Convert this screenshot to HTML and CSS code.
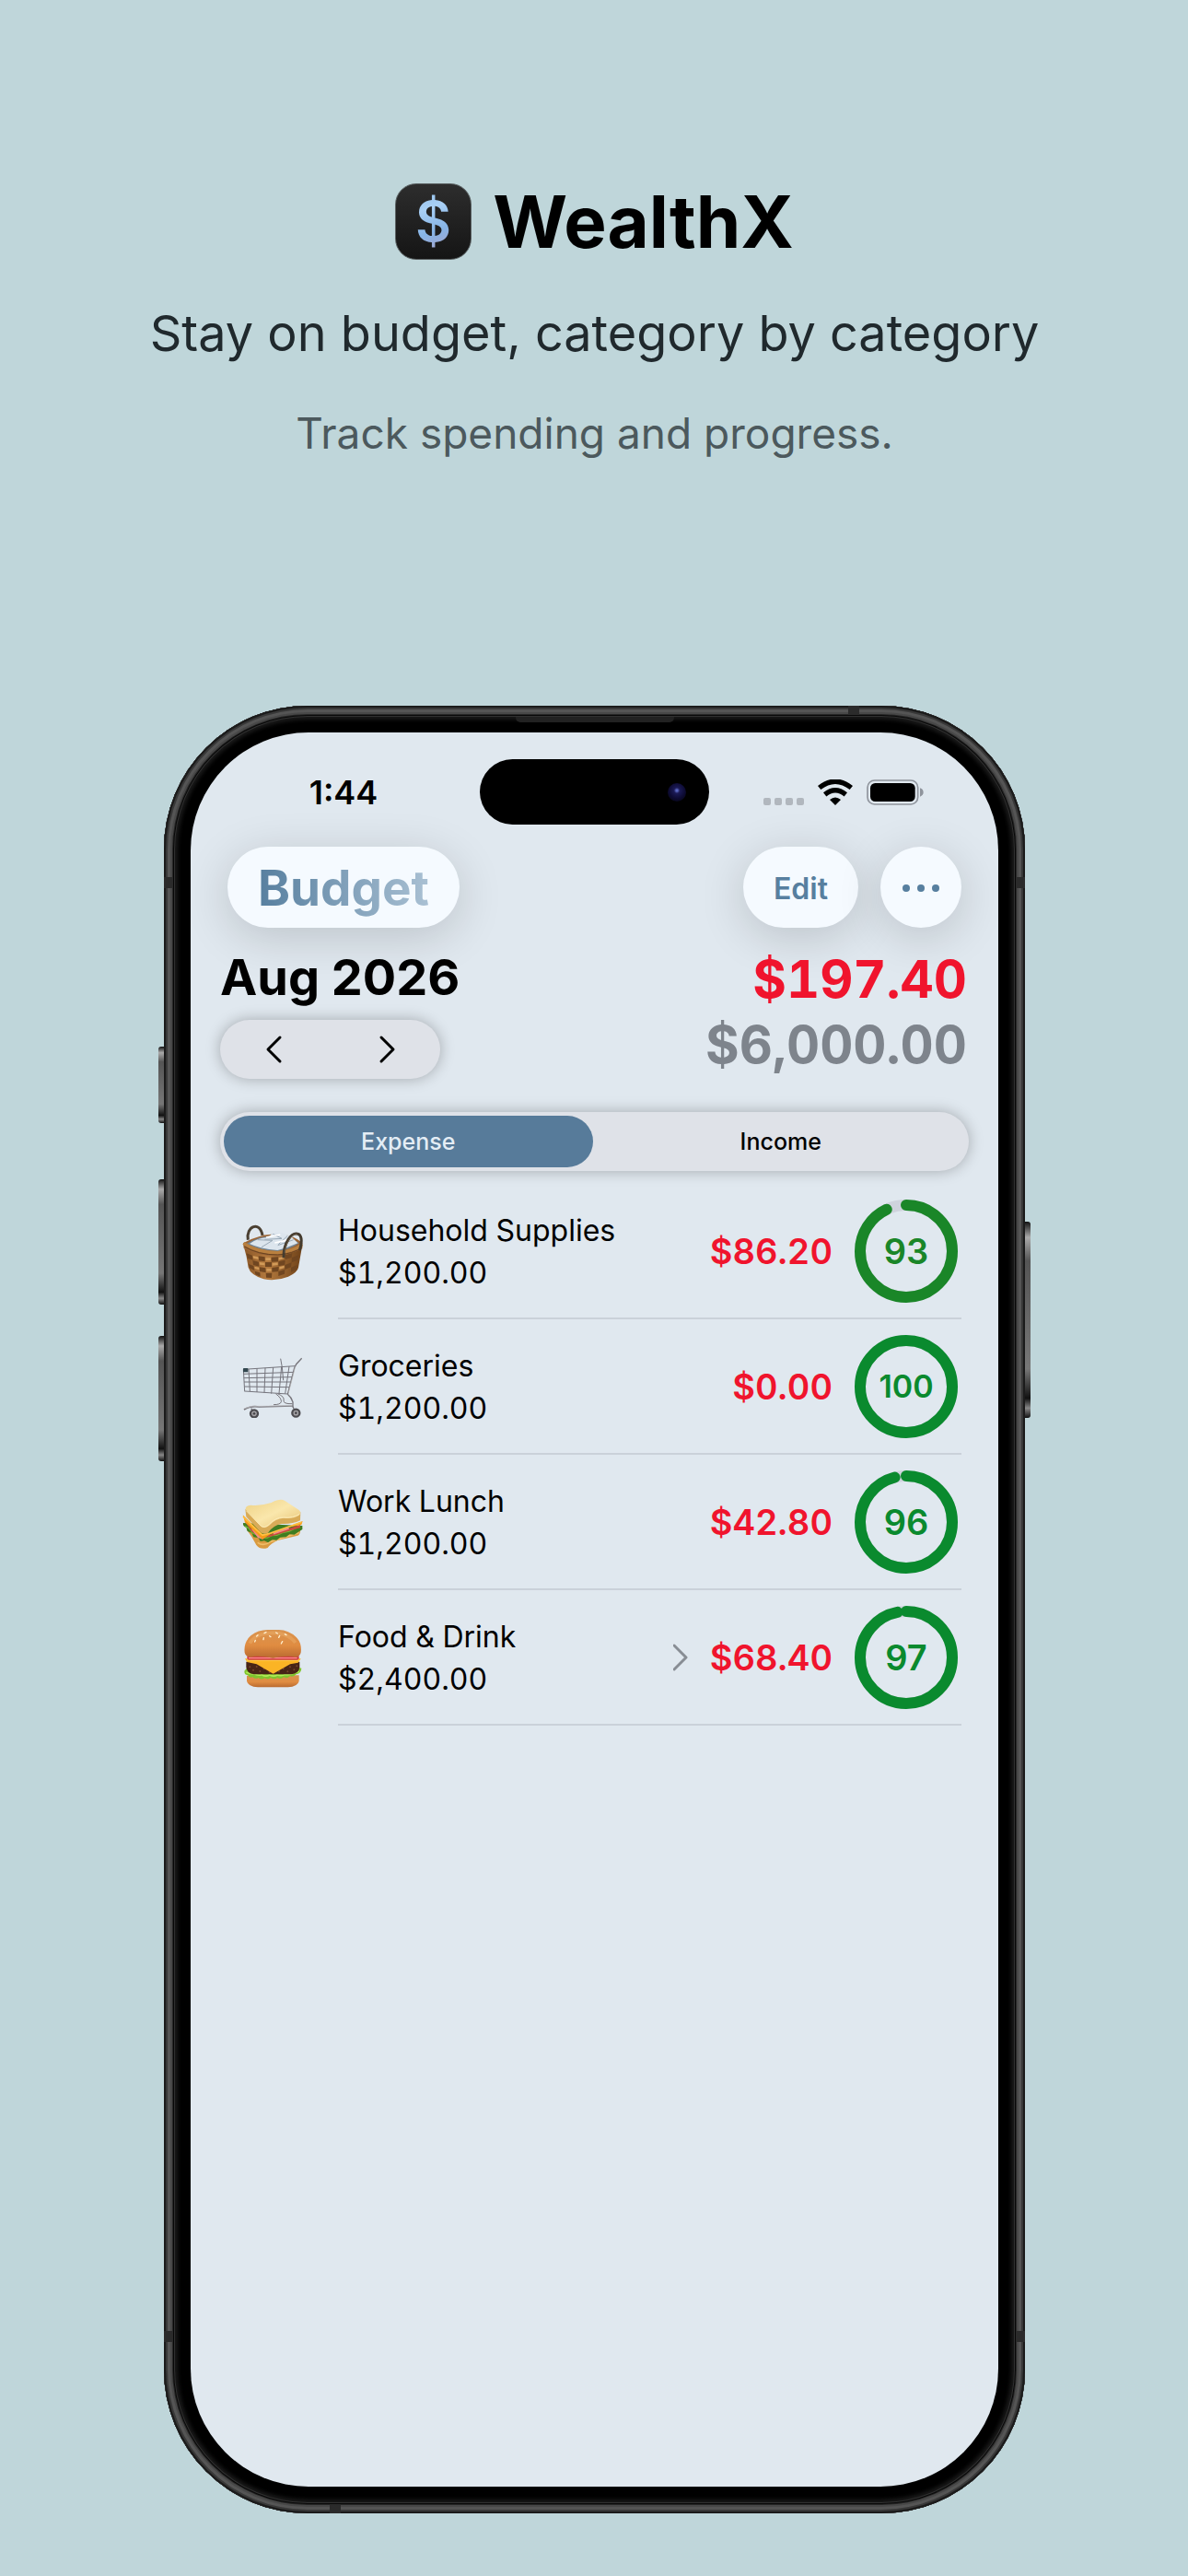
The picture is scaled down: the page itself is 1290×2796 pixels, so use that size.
FILE: index.html
```html
<!DOCTYPE html>
<html lang="en">
  <head>
    <meta charset="utf-8">
    <meta name="viewport" content="width=device-width, initial-scale=1.0">
    <title>WealthX</title>
    <link rel="stylesheet" href="styles.css">
  </head>
  <body>
    <header class="hero">
      <div class="brand">
        <span class="app-icon">$</span>
        <h1>WealthX</h1>
      </div>
      <h2>Stay on budget, category by category</h2>
      <p>Track spending and progress.</p>
    </header>

    <main class="phone">
      <!-- side buttons and antenna bands -->
      <span class="key key-action"></span>
      <span class="key key-up"></span>
      <span class="key key-down"></span>
      <span class="key key-power"></span>
      <span class="band band-left"></span>
      <span class="band band-left band-low"></span>
      <span class="band band-right"></span>
      <span class="band band-right band-low"></span>
      <span class="band band-top"></span>
      <span class="band band-bottom"></span>
      <span class="speaker"></span>

      <div class="screen">
        <div class="status">
          <time class="clock">1:44</time>
          <div class="island"><span class="camera"></span></div>
          <div class="signals">
            <svg width="44" height="28" viewBox="0 0 44 28" fill="#b1b7be">
              <rect x="0" y="20" width="8" height="8" rx="2"/>
              <rect x="12" y="20" width="8" height="8" rx="2"/>
              <rect x="24" y="20" width="8" height="8" rx="2"/>
              <rect x="36" y="20" width="8" height="8" rx="2"/>
            </svg>
            <svg width="38" height="28" viewBox="0 0 114 84">
              <path d="M5 27Q57 -14 109 27M23 49Q57 22 91 49" fill="none" stroke="#000" stroke-width="16"/>
              <path d="M39 66Q57 51 75 66L57 84Z"/>
            </svg>
            <svg width="62" height="28" viewBox="0 0 186 84">
              <rect x="3" y="3" width="164" height="78" rx="23" fill="none" stroke="#8f949c" stroke-width="5"/>
              <rect x="12" y="12" width="146" height="60" rx="16"/>
              <path d="M174 28Q185 32 185 42T174 56Z" fill="#8f949c"/>
            </svg>
          </div>
        </div>

        <nav class="toolbar">
          <div class="glass title"><span>Budget</span></div>
          <button class="glass edit">Edit</button>
          <button class="glass more" aria-label="More">
            <svg width="40" height="10" viewBox="0 0 40 10" fill="#577f9f">
              <circle cx="4" cy="5" r="4"/>
              <circle cx="20" cy="5" r="4"/>
              <circle cx="36" cy="5" r="4"/>
            </svg>
          </button>
        </nav>

        <section class="summary">
          <div>
            <h3>Aug 2026</h3>
            <div class="stepper">
              <button aria-label="Previous month">
                <svg width="20" height="32" viewBox="0 0 20 32"><path d="M17 3L4 16L17 29"/></svg>
              </button>
              <button aria-label="Next month">
                <svg width="20" height="32" viewBox="0 0 20 32"><path d="M3 3L16 16L3 29"/></svg>
              </button>
            </div>
          </div>
          <div class="totals">
            <div class="spent">$197.40</div>
            <div class="limit">$6,000.00</div>
          </div>
        </section>

        <div class="segments">
          <input type="radio" name="kind" id="expense" checked>
          <label for="expense">Expense</label>
          <input type="radio" name="kind" id="income">
          <label for="income">Income</label>
        </div>

        <ul class="categories">
          <li>
            <svg class="emoji" viewBox="130 73 198 198">
              <defs>
                <linearGradient id="wicker" x1="0" x2="1">
                  <stop offset="0" stop-color="#8a5728"/>
                  <stop offset=".4" stop-color="#b47a3e"/>
                  <stop offset="1" stop-color="#704319"/>
                </linearGradient>
              </defs>
              <path d="M149 132C141 88 188 68 196 118" fill="none" stroke="#4a3f31" stroke-width="9"/>
              <path d="M136 156Q145 185 150 222Q157 246 200 260Q240 268 280 252Q310 238 313 222L324 160Z" fill="url(#wicker)"/>
              <g fill="#704620">
                <path d="M144 176l19 7 2 15-18-6zM183 185l21 3v15l-20-3zM225 189l22-1v15l-22 1zM270 182l23-7-2 15-21 6z"/>
                <path d="M164 199l20 5 1 15-19-5zM205 205h21v15h-21zM248 203l22-5-1 15-21 5zM292 190l22-8-3 16-20 8z"/>
                <path d="M151 211l16 6 3 15-16-8zM186 221l20 3 1 15-20-4zM227 223l22-3-1 15-21 2zM269 214l22-8-2 15-20 8z"/>
                <path d="M171 234l17 5 1 13-16-7zM207 240h20l-1 16-18-1zM248 235l21-6-1 14-20 7zM289 222l21-8-4 15-17 8z"/>
              </g>
              <g fill="#d19a58">
                <path d="M165 184l17 4 1 8-17-4zM206 191h17v8h-17zM249 190l18-4-1 8-17 4zM186 205l17 2v8l-16-2zM228 208l18-2v8l-18 2zM170 219l15 3v8l-14-4zM209 226h16v8h-16zM251 220l16-4v8l-16 4z"/>
              </g>
              <path d="M133 143Q180 116 240 113Q300 118 326 142L326 160Q296 178 245 185Q174 184 135 159Z" fill="#9c6535"/>
              <path d="M145 144Q188 119 240 119Q291 122 315 143Q288 163 246 169Q184 167 145 144Z" fill="#718596"/>
              <path d="M154 145Q185 123 214 125L230 110L260 109L292 124L311 143L274 158L245 166Q188 161 154 145Z" fill="#dce5ed"/>
              <path d="M180 132l49 2-36 22m37-43l29 15-56 3m75-12l-30 28m49-15l-51 18" fill="none" stroke="#98a8b6" stroke-width="3"/>
              <path d="M208 124l46-9m-18 27l46-10" fill="none" stroke="#fff" stroke-width="5"/>
              <path d="M134 143Q178 173 245 174Q296 170 325 148" fill="none" stroke="#b9803f" stroke-width="10"/>
              <path d="M137 154Q181 181 246 181Q296 178 324 157" fill="none" stroke="#67421f" stroke-width="3"/>
              <path d="M265 191C264 142 291 104 314 114C326 121 324 147 317 166" fill="none" stroke="#443b2e" stroke-width="9"/>
              <path d="M268 174C273 140 291 111 310 114" fill="none" stroke="#81705a" stroke-width="2"/>
            </svg>
            <div class="body">
              <div class="name">Household Supplies<br>$1,200.00</div>
              <div class="amount">$86.20</div>
              <div class="ring olive">
                <svg viewBox="0 0 112 112"><circle cx="56" cy="56" r="50"/><circle class="arc" cx="56" cy="56" r="50" pathLength="100" stroke-dasharray="93 100"/></svg>
                <b>93</b>
              </div>
            </div>
          </li>
          <li>
            <svg class="emoji" viewBox="130 513 198 198">
              <g fill="none" stroke="#75757d" stroke-width="3">
                <path d="M134 553L302 542M134 568L298 562M135 581L293 578M136 594L288 594M137 609L283 611M138 624L278 633"/>
                <path d="M134 553l4 72M151 552l4 72M178 550v77M205 548l-3 81M231 546l-6 86M258 544l-8 88M283 543l-13 89"/>
                <path d="M255 518l5 28 4 43"/>
              </g>
              <g fill="none" stroke="#77757b" stroke-width="4">
                <path d="M324 517l-18 19-6 12-22 86M278 634q12 10 17 25v17"/>
                <path d="M239 632q20 15 18 27-3 9-25 9M245 632q24 10 20 22-2 12 28 11" stroke-width="3"/>
                <path d="M136 684q22-14 50-9l109-3" stroke-width="5"/>
                <path d="M159 680l9 13M295 674l7 16"/>
              </g>
              <path d="M138 680q26-11 50-7l105-2" fill="none" stroke="#c9c8cc" stroke-width="2"/>
              <path d="M303 544l-22 84" stroke="#bbb" stroke-width="2"/>
              <rect x="133" y="549" width="16" height="13" rx="2" fill="#33474f"/>
              <g fill="#a5a3a6" stroke="#4c4b4f" stroke-width="7">
                <circle cx="169" cy="697" r="12"/>
                <circle cx="305" cy="695" r="12"/>
              </g>
              <circle cx="169" cy="697" r="4" fill="#47464a"/>
              <circle cx="305" cy="695" r="4" fill="#47464a"/>
            </svg>
            <div class="body">
              <div class="name">Groceries<br>$1,200.00</div>
              <div class="amount">$0.00</div>
              <div class="ring full">
                <svg viewBox="0 0 112 112"><circle cx="56" cy="56" r="50"/><circle class="arc" cx="56" cy="56" r="50" pathLength="100" stroke-dasharray="100 100"/></svg>
                <b>100</b>
              </div>
            </div>
          </li>
          <li>
            <svg class="emoji" viewBox="130 114 198 198">
              <defs>
                <linearGradient id="bread" x1="0" y1="0" x2="1" y2="1">
                  <stop offset="0" stop-color="#eed184"/>
                  <stop offset=".5" stop-color="#fae7ac"/>
                  <stop offset="1" stop-color="#e6c274"/>
                </linearGradient>
              </defs>
              <path d="M144 234Q160 254 176 285Q190 302 213 294Q224 279 245 270L311 254Q321 249 319 230Z" fill="#d99a3f"/>
              <path d="M180 277Q200 291 222 274L315 244" fill="none" stroke="#efbd68" stroke-width="5"/>
              <path d="M133 213q-2 10 10 15l4 12 14 5 6 14 16 3 6 11 13-2 12 6 14-9 14 1 12-9 19-1 11-9 16 1 13-9 13-8V222Z" fill="#3f7d21"/>
              <path d="M139 224l13 6 11 16 17 6 10 11 22-2 14-7 17-1 18-8 22-5 26-12" fill="none" stroke="#75b736" stroke-width="4"/>
              <path d="M137 207L178 252L197 267L218 252L319 219L319 229L279 240L220 258L190 264L160 240Z" fill="#c9483d"/>
              <path d="M163 231l20 27 15 5M231 247l51-17" fill="none" stroke="#f08f86" stroke-width="7"/>
              <path d="M132 187L196 249L223 246L327 207L323 219L279 227L222 250L196 266L139 211Z" fill="#f79c19"/>
              <path d="M133 192L176 235L196 253L222 246L323 211" fill="none" stroke="#ffc044" stroke-width="5"/>
              <path d="M140 169L143 193L190 244Q200 252 214 245Q229 222 258 216Q291 218 319 205L320 178Z" fill="#d8ab58"/>
              <path d="M141 169Q139 157 158 155Q192 158 225 147Q253 132 268 140L315 171Q325 181 314 189Q297 200 265 197Q239 198 218 221Q203 234 191 224Z" fill="url(#bread)"/>
              <path d="M143 173l49 51q10 7 22-3 25-28 51-26 31 3 52-11" fill="none" stroke="#fdecb8" stroke-width="3"/>
            </svg>
            <div class="body">
              <div class="name">Work Lunch<br>$1,200.00</div>
              <div class="amount">$42.80</div>
              <div class="ring">
                <svg viewBox="0 0 112 112"><circle cx="56" cy="56" r="50"/><circle class="arc" cx="56" cy="56" r="50" pathLength="100" stroke-dasharray="96 100"/></svg>
                <b>96</b>
              </div>
            </div>
          </li>
          <li>
            <svg class="emoji" viewBox="130 557 198 198">
              <defs>
                <linearGradient id="bun" x1="0" y1="0" x2="0" y2="1">
                  <stop offset="0" stop-color="#d99450"/>
                  <stop offset=".55" stop-color="#e08c41"/>
                  <stop offset="1" stop-color="#b96a30"/>
                </linearGradient>
              </defs>
              <path d="M145 712V730Q149 748 181 750H279Q311 748 315 730V711Z" fill="url(#bun)"/>
              <path d="M137 697q0 14 11 13 4 11 16 7 9 8 19 2 10 9 20 1 11 7 20-1 12 8 21 0 13 7 21-2 12 6 21-3 11 4 20-6 17-4 17-20l-20-5H149Z" fill="#80c52e"/>
              <path d="M143 701q14 7 24 4 14 9 26 4 14 8 26 1 15 7 25 0 15 5 26-2 17 4 28-6l18-3" fill="none" stroke="#b1ec56" stroke-width="5"/>
              <path d="M143 667H317V686Q314 706 290 708H169Q144 705 143 684Z" fill="#472416"/>
              <g fill="#78452c">
                <circle cx="155" cy="684" r="3"/><circle cx="166" cy="694" r="3"/><circle cx="177" cy="683" r="3"/><circle cx="188" cy="698" r="3"/><circle cx="201" cy="690" r="3"/><circle cx="219" cy="701" r="3"/><circle cx="250" cy="699" r="3"/><circle cx="264" cy="690" r="3"/><circle cx="278" cy="699" r="3"/><circle cx="286" cy="684" r="3"/><circle cx="299" cy="693" r="3"/><circle cx="308" cy="681" r="3"/>
              </g>
              <path d="M139 657H321L312 670L286 675L231 706L177 675L146 668Z" fill="#fbb425"/>
              <path d="M145 662H316" stroke="#ffd250" stroke-width="4"/>
              <rect x="146" y="644" width="169" height="17" rx="6" fill="#ce3e42"/>
              <path d="M151 655H309" stroke="#ff898d" stroke-width="4"/>
              <path d="M138 637Q134 604 158 582Q183 562 216 563H249Q282 564 306 587Q325 606 321 637Q318 650 302 652Q281 646 230 655Q180 646 158 652Q141 650 138 637Z" fill="url(#bun)"/>
              <path d="M155 607Q172 574 229 573Q280 573 303 605" fill="none" stroke="#eaa963" stroke-width="11" opacity=".6"/>
              <g stroke="#fff0cf" stroke-width="4" stroke-linecap="round">
                <path d="M181 580l-4 4M200 589l-1 6M208 571l-6 3M219 583l4 3M240 572l5 3M252 582l-3 6M269 577l5 3M261 601l-4 7M173 597l-2 5"/>
              </g>
            </svg>
            <div class="body">
              <div class="name">Food &amp; Drink<br>$2,400.00</div>
              <svg class="chevron" width="16" height="32" viewBox="2 0 16 32"><path d="M3 3L16 16L3 29"/></svg>
              <div class="amount">$68.40</div>
              <div class="ring">
                <svg viewBox="0 0 112 112"><circle cx="56" cy="56" r="50"/><circle class="arc" cx="56" cy="56" r="50" pathLength="100" stroke-dasharray="97 100"/></svg>
                <b>97</b>
              </div>
            </div>
          </li>
        </ul>
      </div>
    </main>
  </body>
</html>
```

FILE: styles.css
```css
* {
  box-sizing: border-box;
}
body {
  margin: 0;
  padding: 199px 177px 68px 178px;
  min-height: 100vh;
  background: #bfd6da;
  color: #000;
  font-family: Inter, "Liberation Sans", sans-serif;
}
h1, h2, h3, p, ul {
  margin: 0;
  padding: 0;
}
button {
  border: none;
  padding: 0;
  background: none;
  font-family: inherit;
  cursor: pointer;
}
svg {
  display: block;
  flex: none;
}

/* headline above the phone */
.hero {
  margin: 0 -120px 266px;
  text-align: center;
}
.brand {
  display: flex;
  align-items: center;
  justify-content: center;
  gap: 23px;
  height: 83px;
}
.app-icon {
  width: 83px;
  height: 83px;
  border-radius: 23px;
  border: 1px solid #5a6162;
  background: linear-gradient(160deg, #7db0e0, #a9d0f5 35%, #86b4e6 60%, #a3a6cf 80%, #7db4e8) text, linear-gradient(#2d2d2d, #151515);
  -webkit-text-fill-color: transparent;
  font-size: 60px;
  font-weight: 600;
  line-height: 80px;
}
.brand h1 {
  font-size: 78px;
  font-weight: 700;
  line-height: 86px;
}
.hero h2 {
  margin-top: 46px;
  color: #20292d;
  font-size: 54px;
  font-weight: 400;
  line-height: 68px;
}
.hero p {
  margin-top: 44px;
  color: #4c595d;
  font-size: 46px;
  line-height: 60px;
}

/* phone body */
.phone {
  position: relative;
  padding: 29px;
  border-radius: 156px;
  background: #000;
  box-shadow:
    inset 0 0 0 2px #1b1b1b,
    inset 0 0 0 4px #383838,
    inset 0 0 0 7px #555,
    inset 0 0 0 9px #484848,
    inset 0 0 0 10px #282828,
    inset 0 0 0 11px #080808,
    inset 0 0 0 12px #303030,
    inset 0 0 4px 15px #1a1a1a;
}
.screen {
  aspect-ratio: 877 / 1904;
  padding-top: 29px;
  border-radius: 128px;
  background: #e0e8ef;
  overflow: hidden;
}
.key {
  position: absolute;
  left: -6px;
  width: 6px;
  border-radius: 3px 0 0 3px;
  background: linear-gradient(#111, #aaa 8%, #555 20%, #777 75%, #111 90%, #888 95%, #111);
}
.key-action { top: 370px; height: 83px; }
.key-up { top: 514px; height: 136px; }
.key-down { top: 684px; height: 136px; }
.key-power {
  left: auto;
  right: -6px;
  top: 560px;
  height: 213px;
  border-radius: 0 3px 3px 0;
}
.band {
  position: absolute;
  width: 10px;
  height: 12px;
  background: #2b2b2b;
}
.band-left { left: 0; top: 186px; }
.band-right { right: 0; top: 186px; }
.band-low { top: auto; bottom: 186px; }
.band-top { right: 180px; top: 0; width: 12px; height: 10px; }
.band-bottom { left: 180px; bottom: 0; width: 12px; height: 10px; }
.speaker {
  position: absolute;
  top: 12px;
  left: 50%;
  width: 172px;
  height: 6px;
  margin-left: -86px;
  border-radius: 0 0 5px 5px;
  background: #222;
}

/* status bar */
.status {
  display: grid;
  grid-template-columns: 1fr 249px 1fr;
  align-items: center;
  padding: 0 10px;
}
.clock {
  padding-left: 8px;
  text-align: center;
  font-size: 36px;
  font-weight: 600;
  line-height: 44px;
}
.island {
  display: flex;
  align-items: center;
  justify-content: flex-end;
  height: 71px;
  padding-right: 25px;
  border-radius: 36px;
  background: #000;
}
.camera {
  width: 20px;
  height: 20px;
  border-radius: 50%;
  background: radial-gradient(circle at 50% 40%, #5a66c0 0 6%, #1b1a55 20%, #0d0b33 55%, #030308);
}
.signals {
  display: flex;
  justify-content: center;
  gap: 15px;
  padding-right: 12px;
}

/* toolbar */
.toolbar {
  display: flex;
  gap: 24px;
  margin-top: 24px;
  padding: 0 40px;
}
.glass {
  display: flex;
  align-items: center;
  justify-content: center;
  height: 88px;
  padding: 2px 33px 0;
  border-radius: 44px;
  background: #f5faff;
  box-shadow: 0 10px 50px rgba(0, 0, 0, 0.16);
  color: #577f9f;
}
.title {
  margin-right: auto;
  font-size: 53px;
  font-weight: 700;
}
.title span {
  background: linear-gradient(90deg, #577f9f, #a9c0d3) text;
  color: transparent;
}
.edit {
  font-size: 32px;
  font-weight: 600;
}
.more {
  width: 88px;
  padding: 2px 0 0;
}

/* month and totals */
.summary {
  display: flex;
  justify-content: space-between;
  margin-top: 21px;
  padding: 0 34px 0 32px;
}
.summary h3 {
  font-size: 54px;
  font-weight: 700;
  line-height: 66px;
}
.stepper {
  display: flex;
  align-items: center;
  gap: 9px;
  width: 239px;
  height: 64px;
  margin-top: 13px;
  border-radius: 32px;
  background: #dfe2e8;
  box-shadow: 0 0 16px rgba(0, 0, 0, 0.28);
}
.stepper button {
  display: flex;
  flex: 1;
  justify-content: center;
}
.stepper path, .chevron path {
  fill: none;
  stroke: #000;
  stroke-width: 3;
  stroke-linecap: round;
  stroke-linejoin: round;
}
.totals {
  font-size: 56px;
  font-weight: 700;
  font-variant-numeric: tabular-nums;
  line-height: 71px;
  text-align: right;
}
.spent, .amount {
  color: #f0142d;
}
.limit {
  color: #7e848c;
}

/* expense / income switch */
.segments {
  display: flex;
  gap: 4px;
  height: 64px;
  margin: 36px 32px 0;
  padding: 4px;
  border-radius: 32px;
  background: #dfe2e8;
  box-shadow: 0 0 16px rgba(0, 0, 0, 0.28);
}
.segments input {
  position: absolute;
  opacity: 0;
}
.segments label {
  flex: 1;
  border-radius: 28px;
  font-size: 25px;
  font-weight: 500;
  line-height: 56px;
  text-align: center;
}
.segments input:checked + label {
  background: #577b9a;
  color: #e4edf5;
}

/* category list */
.categories {
  margin-top: 14px;
  padding: 0 40px 0 56px;
  list-style: none;
}
.categories li {
  display: flex;
  align-items: center;
  gap: 38px;
}
.emoji {
  width: 66px;
  height: 66px;
}
.body {
  display: flex;
  flex: 1;
  align-items: center;
  gap: 24px;
  height: 147px;
  padding-right: 4px;
  border-bottom: 2px solid #cad1d9;
}
.name {
  margin-right: auto;
  padding-top: 2px;
  font-size: 32px;
  font-variant-numeric: tabular-nums;
  line-height: 46px;
}
.chevron path {
  stroke: #888d94;
}
.amount {
  font-size: 38px;
  font-weight: 600;
  font-variant-numeric: tabular-nums;
}
.ring {
  position: relative;
  width: 112px;
  height: 112px;
  color: #0a8a2e;
}
.ring.olive {
  color: #1a8628;
}
.ring svg {
  transform: rotate(-90deg);
}
.ring circle {
  fill: none;
  stroke: #cfd3dd;
  stroke-width: 12;
}
.ring .arc {
  stroke: currentColor;
  stroke-linecap: round;
}
.ring b {
  position: absolute;
  inset: 0;
  font-size: 38px;
  font-weight: 600;
  line-height: 112px;
  text-align: center;
}
.ring.full b {
  font-size: 34px;
}
```
